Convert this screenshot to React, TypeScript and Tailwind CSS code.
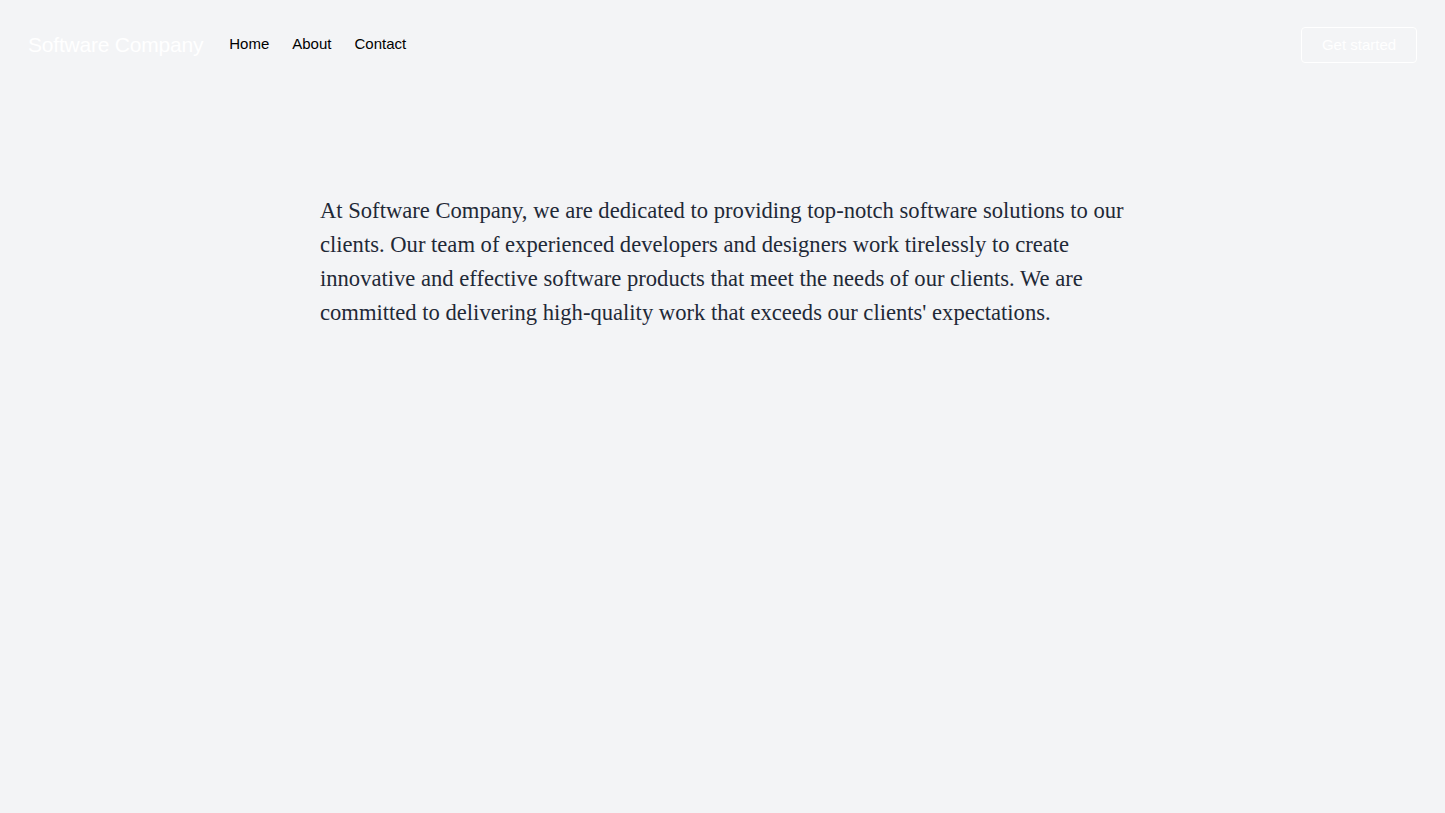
export default function App() {
  return (
    <div className="min-h-screen bg-[#f3f4f6]" style={{ fontFamily: '"Liberation Sans", Arial, sans-serif' }}>
      {/* Nav */}
      <nav className="flex items-center justify-between px-7 py-[27px]">
        <div className="flex items-center">
          <span className="mr-[26px] text-[21px] tracking-[-0.01em] text-white">Software Company</span>
          <div className="flex items-center gap-[23px] pb-[2px] text-[15px] text-black">
            <a href="#">Home</a>
            <a href="#">About</a>
            <a href="#">Contact</a>
          </div>
        </div>
        <a
          href="#"
          className="flex h-[36px] w-[116px] items-center justify-center rounded border border-white text-[15px] text-white"
        >
          Get started
        </a>
      </nav>

      {/* Content */}
      <main className="mx-auto mt-[104px] w-[805px]">
        <p
          className="text-[22.6px] leading-[34px] text-[#1f2937]"
          style={{ fontFamily: '"Liberation Serif", serif' }}
        >
          At Software Company, we are dedicated to providing top-notch software solutions to our clients. Our team
          of experienced developers and designers work tirelessly to create innovative and effective software
          products that meet the needs of our clients. We are committed to delivering high-quality work that
          exceeds our clients' expectations.
        </p>
      </main>
    </div>
  );
}
